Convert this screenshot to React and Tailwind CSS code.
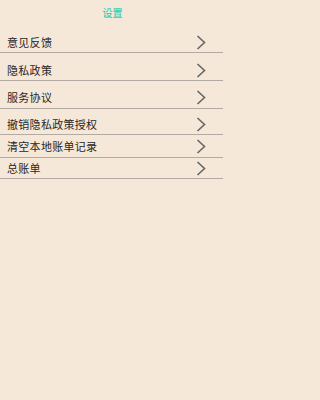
import React from 'react';

const items = [
  { label: '意见反馈', row: 'h-[22px] pt-[1px]' },
  { label: '隐私政策', row: 'h-[28px] pt-[8px]' },
  { label: '服务协议', row: 'h-[28px] pt-[5px]' },
  { label: '撤销隐私政策授权', row: 'h-[26px] pt-[6px]' },
  { label: '清空本地账单记录', row: 'h-[23px] pt-[1px]' },
  { label: '总账单', row: 'h-[21px] pt-[1px]' },
];

const Chevron = () => (
  <svg width="10" height="15" viewBox="0 0 10 15" fill="none">
    <polyline points="1.5,1 8.5,7.5 1.5,14" stroke="#666666" strokeWidth="1.6" strokeLinejoin="miter" />
  </svg>
);

export default function App() {
  return (
    <div
      className="w-full min-h-screen bg-[#f6e8d9]"
      style={{ fontFamily: '"Noto Sans CJK SC", "Noto Sans", sans-serif' }}
    >
      <div className="w-[225px] h-[400px] overflow-hidden">
        {/* Header */}
        <div className="h-[31px] flex justify-center pt-[8px]">
          <span className="text-[10px] leading-none text-[#35cfb5] font-medium">设置</span>
        </div>

        {/* Menu */}
        <div className="w-[223px]">
          {items.map((item) => (
            <div
              key={item.label}
              className={`flex items-center justify-between border-b border-[#b3aba3] pl-[7px] pr-[17px] ${item.row}`}
            >
              <span className="text-[11px] leading-none text-[#262626] tracking-[0.3px]">{item.label}</span>
              <Chevron />
            </div>
          ))}
        </div>
      </div>
    </div>
  );
}
